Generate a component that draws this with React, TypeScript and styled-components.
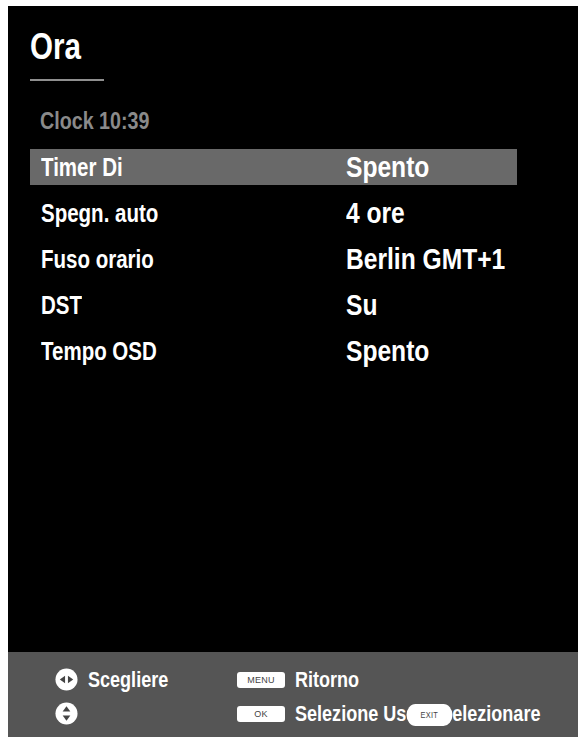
import * as React from 'react';
import styled, { createGlobalStyle } from 'styled-components';

const fontStack = '"Liberation Sans", Arial, sans-serif';

const GlobalStyle = createGlobalStyle`
  html, body {
    margin: 0;
    padding: 0;
    background: #ffffff;
  }
  body {
    font-family: ${fontStack};
    font-weight: 700;
  }
`;

// The TV menu uses a condensed face; no narrow font is installed, so squeeze
// the regular one horizontally.
const Narrow = styled.span`
  display: inline-block;
  white-space: nowrap;
  transform: scaleX(0.82);
  transform-origin: left center;
`;

const Page = styled.div`
  width: 578px;
  height: 740px;
  box-sizing: border-box;
  padding: 6px 5px 3px 8px;
  display: flex;
`;

const Screen = styled.div`
  flex: 1;
  display: flex;
  flex-direction: column;
  border-right: 2px solid #c8c8c8;
  background: #000;
`;

const Body = styled.div`
  flex: 1;
  padding: 21px 0 0 22px;
  color: #fff;
`;

const Title = styled.div`
  font-size: 36px;
  line-height: 40px;
`;

const TitleRule = styled.div`
  width: 74px;
  height: 2px;
  margin-top: 12px;
  background: #8f8f8f;
`;

const Clock = styled.div`
  margin: 25px 0 0 10px;
  font-size: 24px;
  line-height: 30px;
  color: #8a8a8a;
`;

const List = styled.div`
  margin-top: 13px;
  width: 487px;
  display: flex;
  flex-direction: column;
  gap: 10px;
`;

const Row = styled.div<{ $selected?: boolean }>`
  height: 36px;
  display: grid;
  grid-template-columns: 305px 1fr;
  align-items: center;
  padding-left: 11px;
  background: ${p => (p.$selected ? '#696969' : 'transparent')};
`;

const Label = styled.span`
  font-size: 25px;
`;

const Value = styled.span`
  font-size: 30px;
`;

const Footer = styled.div`
  height: 85px;
  background: #555555;
  color: #fff;
  display: grid;
  grid-template-columns: 182px 1fr;
  grid-template-rows: 34px 34px;
  align-content: center;
  padding: 4px 0 0 47px;
  box-sizing: border-box;
`;

const Hint = styled.div`
  display: flex;
  align-items: center;
  gap: 10px;
  font-size: 22px;
  white-space: nowrap;
`;

const Key = styled.span<{ $pill?: boolean }>`
  display: inline-flex;
  align-items: center;
  justify-content: center;
  width: ${p => (p.$pill ? '56px' : '48px')};
  height: ${p => (p.$pill ? '22px' : '16px')};
  border-radius: ${p => (p.$pill ? '11px' : '3px')};
  background: #fff;
  color: #444;
  font-size: 9px;
  font-weight: 400;
  letter-spacing: 0.3px;
  flex: none;
  vertical-align: middle;
`;

const NavIcon = ({ vertical }: { vertical?: boolean }) => (
  <svg width="23" height="23" viewBox="0 0 24 24">
    <circle cx="12" cy="12" r="11.5" fill="#fff" />
    {vertical ? (
      <g fill="#444">
        <path d="M12 4.5 L16 10 H8 Z" />
        <path d="M12 19.5 L16 14 H8 Z" />
      </g>
    ) : (
      <g fill="#444">
        <path d="M5 12 L10.5 8 V16 Z" />
        <path d="M19 12 L13.5 8 V16 Z" />
      </g>
    )}
  </svg>
);

const rows = [
  { label: 'Timer Di', value: 'Spento' },
  { label: 'Spegn. auto', value: '4 ore' },
  { label: 'Fuso orario', value: 'Berlin GMT+1' },
  { label: 'DST', value: 'Su' },
  { label: 'Tempo OSD', value: 'Spento' },
];

export default function App() {
  return (
    <Page>
      <GlobalStyle />
      <Screen>
        <Body>
          <Title><Narrow>Ora</Narrow></Title>
          <TitleRule />
          <Clock><Narrow>Clock 10:39</Narrow></Clock>
          <List>
            {rows.map((r, i) => (
              <Row key={r.label} $selected={i === 0}>
                <Label><Narrow>{r.label}</Narrow></Label>
                <Value><Narrow>{r.value}</Narrow></Value>
              </Row>
            ))}
          </List>
        </Body>
        <Footer>
          <Hint>
            <NavIcon />
            <Narrow>Scegliere</Narrow>
          </Hint>
          <Hint>
            <Key>MENU</Key>
            <Narrow>Ritorno</Narrow>
          </Hint>
          <Hint>
            <NavIcon vertical />
          </Hint>
          <Hint>
            <Key>OK</Key>
            <Narrow>
              Selezione Us
              <Key $pill>EXIT</Key>
              elezionare
            </Narrow>
          </Hint>
        </Footer>
      </Screen>
    </Page>
  );
}
